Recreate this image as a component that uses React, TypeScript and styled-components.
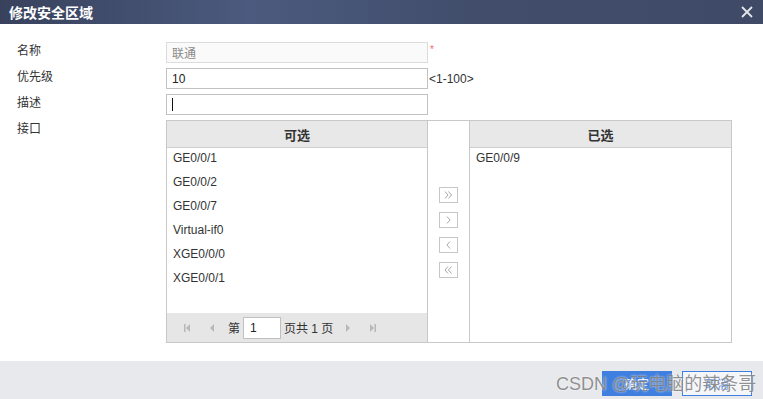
import React from "react";
import styled, { createGlobalStyle } from "styled-components";

const GlobalStyle = createGlobalStyle`
  html, body {
    margin: 0;
    padding: 0;
    background: #ffffff;
  }
  body {
    font-family: "Liberation Sans", "Noto Sans CJK SC", sans-serif;
    font-size: 12px;
    color: #333333;
  }
`;

const Dialog = styled.div`
  position: relative;
  width: 763px;
  height: 399px;
  display: flex;
  flex-direction: column;
  background: #ffffff;
  overflow: hidden;
`;

const TitleBar = styled.header`
  height: 24px;
  flex: none;
  display: flex;
  align-items: center;
  justify-content: space-between;
  padding: 0 10px 0 9px;
  background: linear-gradient(90deg, #38425d 0%, #4b5a7e 33%, #414d6b 62%, #3e4a66 100%);
`;

const Title = styled.h1`
  margin: 0;
  font-size: 14px;
  font-weight: bold;
  color: #ffffff;
`;

const CloseButton = styled.button`
  border: none;
  background: none;
  padding: 0;
  width: 12px;
  height: 12px;
  display: flex;
  cursor: pointer;
`;

const Body = styled.section`
  flex: 1;
  padding: 18px 32px 0 17px;
  display: flex;
  flex-direction: column;
  gap: 5px;
`;

const Row = styled.div`
  display: flex;
  align-items: center;
  height: 21px;
`;

const Label = styled.label<{ $top?: boolean }>`
  width: 149px;
  flex: none;
  color: #333333;
  font-size: 12px;
  align-self: ${(p) => (p.$top ? "flex-start" : "center")};
  margin-top: ${(p) => (p.$top ? "-1px" : "-6px")};
`;

const Field = styled.div<{ $disabled?: boolean }>`
  width: 262px;
  height: 21px;
  box-sizing: border-box;
  border: 1px solid ${(p) => (p.$disabled ? "#dcdcdc" : "#c2c2c2")};
  background: ${(p) => (p.$disabled ? "#fafafa" : "#ffffff")};
  color: ${(p) => (p.$disabled ? "#8a8a8a" : "#222222")};
  padding: 0 5px;
  display: flex;
  align-items: center;
  font-size: 12px;
`;

const Caret = styled.span`
  width: 1px;
  height: 13px;
  background: #111111;
`;

const Required = styled.span`
  color: #f06a6a;
  font-size: 10px;
  margin-left: 2px;
  margin-top: -6px;
`;

const Hint = styled.span`
  color: #333333;
  margin-left: 1px;
  font-size: 12px;
`;

const InterfaceRow = styled.div`
  display: flex;
`;

const Transfer = styled.div`
  display: flex;
  width: 566px;
  height: 223px;
  box-sizing: border-box;
  border: 1px solid #c8c8c8;
`;

const ListPanel = styled.div<{ $width: number }>`
  width: ${(p) => p.$width}px;
  flex: none;
  display: flex;
  flex-direction: column;
`;

const ListHeader = styled.div`
  height: 26px;
  flex: none;
  background: #e8e8e8;
  border-bottom: 1px solid #cfcfcf;
  display: flex;
  align-items: center;
  justify-content: center;
  font-weight: bold;
  font-size: 13px;
  color: #333333;
`;

const Items = styled.ul`
  list-style: none;
  margin: 0;
  padding: 0 6px;
  flex: 1;
`;

const Item = styled.li`
  height: 20px;
  line-height: 20px;
  margin-bottom: 4px;
  color: #333333;
  font-size: 12px;
`;

const Pager = styled.div`
  height: 29px;
  flex: none;
  background: #e6e6e6;
  display: flex;
  align-items: center;
  padding-left: 8px;
  color: #333333;
  font-size: 12px;
`;

const PagerIcon = styled.span`
  width: 24px;
  display: flex;
  justify-content: center;
`;

const PagerWord = styled.span`
  margin-left: 5px;
`;

const PageInput = styled.div`
  width: 38px;
  height: 22px;
  box-sizing: border-box;
  border: 1px solid #c0c0c0;
  background: #ffffff;
  margin: 0 3px 0 3px;
  padding-left: 6px;
  display: flex;
  align-items: center;
  font-size: 12px;
  color: #222222;
`;

const PagerText = styled.span`
  margin-right: 3px;
`;

const MoveColumn = styled.div`
  width: 43px;
  flex: none;
  border-left: 1px solid #c8c8c8;
  border-right: 1px solid #c8c8c8;
  display: flex;
  flex-direction: column;
  align-items: center;
  justify-content: center;
  gap: 9px;
  padding-top: 2px;
  box-sizing: border-box;
`;

const MoveButton = styled.button`
  width: 19px;
  height: 16px;
  padding: 0;
  box-sizing: border-box;
  border: 1px solid #c6c6c6;
  background: #ffffff;
  display: flex;
  align-items: center;
  justify-content: center;
  cursor: pointer;
`;

const Footer = styled.footer`
  height: 38px;
  flex: none;
  background: #e8e9ec;
  display: flex;
  justify-content: flex-end;
  align-items: flex-start;
  gap: 10px;
  padding: 10px 11px 0 0;
  box-sizing: border-box;
`;

const ActionButton = styled.button<{ $primary?: boolean }>`
  width: 70px;
  height: 25px;
  box-sizing: border-box;
  border: 1px solid #3f7fdf;
  background: ${(p) => (p.$primary ? "#3f7fdf" : "#f4f6fa")};
  color: ${(p) => (p.$primary ? "#ffffff" : "#3f7fdf")};
  font-family: "Liberation Sans", "Noto Sans CJK SC", sans-serif;
  font-size: 12px;
  cursor: pointer;
`;

const Watermark = styled.div`
  position: absolute;
  left: 556px;
  top: 369px;
  font-family: "Liberation Sans", "Noto Sans CJK SC", sans-serif;
  font-size: 18px;
  color: rgba(110, 110, 110, 0.75);
  text-shadow: 0 0 2px rgba(255, 255, 255, 0.9);
  pointer-events: none;
  white-space: nowrap;
`;

const available = ["GE0/0/1", "GE0/0/2", "GE0/0/7", "Virtual-if0", "XGE0/0/0", "XGE0/0/1"];
const selected = ["GE0/0/9"];

const Tri = ({ dir, bar }: { dir: "left" | "right"; bar?: boolean }) => (
  <svg width="9" height="10" viewBox="0 0 9 10">
    {dir === "left" ? (
      <>
        {bar && <rect x="1" y="1" width="1.5" height="8" fill="#b8b8b8" />}
        <polygon points="7,1 3,5 7,9" fill="#b8b8b8" />
      </>
    ) : (
      <>
        <polygon points="2,1 6,5 2,9" fill="#b8b8b8" />
        {bar && <rect x="6.5" y="1" width="1.5" height="8" fill="#b8b8b8" />}
      </>
    )}
  </svg>
);

const Chevron = ({ dir, double }: { dir: "left" | "right"; double?: boolean }) => {
  const pts = (x: number) =>
    dir === "right" ? `${x},1.5 ${x + 3},5 ${x},8.5` : `${x + 3},1.5 ${x},5 ${x + 3},8.5`;
  return (
    <svg width="9" height="10" viewBox="0 0 9 10">
      {double ? (
        <>
          <polyline points={pts(1)} fill="none" stroke="#a8a8a8" strokeWidth="1" />
          <polyline points={pts(4.5)} fill="none" stroke="#a8a8a8" strokeWidth="1" />
        </>
      ) : (
        <polyline points={pts(3)} fill="none" stroke="#a8a8a8" strokeWidth="1" />
      )}
    </svg>
  );
};

const App = () => {
  return (
    <Dialog>
      <GlobalStyle />
      <TitleBar>
        <Title>修改安全区域</Title>
        <CloseButton aria-label="close">
          <svg width="12" height="12" viewBox="0 0 12 12">
            <path d="M1 1 L11 11 M11 1 L1 11" stroke="#e4e6ec" strokeWidth="1.8" />
          </svg>
        </CloseButton>
      </TitleBar>
      <Body>
        <Row>
          <Label>名称</Label>
          <Field $disabled>联通</Field>
          <Required>*</Required>
        </Row>
        <Row>
          <Label>优先级</Label>
          <Field>10</Field>
          <Hint>&lt;1-100&gt;</Hint>
        </Row>
        <Row>
          <Label>描述</Label>
          <Field>
            <Caret />
          </Field>
        </Row>
        <InterfaceRow>
          <Label $top>接口</Label>
          <Transfer>
            <ListPanel $width={260}>
              <ListHeader>可选</ListHeader>
              <Items>
                {available.map((name, i) => (
                  <Item key={i}>{name}</Item>
                ))}
              </Items>
              <Pager>
                <PagerIcon>
                  <Tri dir="left" bar />
                </PagerIcon>
                <PagerIcon>
                  <Tri dir="left" />
                </PagerIcon>
                <PagerWord>第</PagerWord>
                <PageInput>1</PageInput>
                <PagerText>页共 1 页</PagerText>
                <PagerIcon>
                  <Tri dir="right" />
                </PagerIcon>
                <PagerIcon>
                  <Tri dir="right" bar />
                </PagerIcon>
              </Pager>
            </ListPanel>
            <MoveColumn>
              <MoveButton aria-label="add all">
                <Chevron dir="right" double />
              </MoveButton>
              <MoveButton aria-label="add">
                <Chevron dir="right" />
              </MoveButton>
              <MoveButton aria-label="remove">
                <Chevron dir="left" />
              </MoveButton>
              <MoveButton aria-label="remove all">
                <Chevron dir="left" double />
              </MoveButton>
            </MoveColumn>
            <ListPanel $width={261}>
              <ListHeader>已选</ListHeader>
              <Items>
                {selected.map((name, i) => (
                  <Item key={i}>{name}</Item>
                ))}
              </Items>
            </ListPanel>
          </Transfer>
        </InterfaceRow>
      </Body>
      <Footer>
        <ActionButton $primary>确定</ActionButton>
        <ActionButton>取消</ActionButton>
      </Footer>
      <Watermark>CSDN @玩电脑的辣条哥</Watermark>
    </Dialog>
  );
};

export default App;
